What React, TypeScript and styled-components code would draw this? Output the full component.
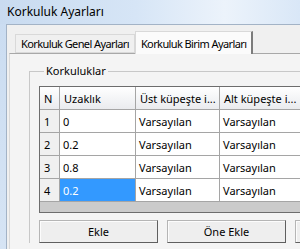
import styled, { createGlobalStyle } from 'styled-components';

const GlobalStyle = createGlobalStyle`
  html, body {
    margin: 0;
    padding: 0;
    background: #f0f0f0;
  }
  body {
    font-family: 'Noto Sans', 'DejaVu Sans', sans-serif;
    font-size: 11px;
    color: #000;
  }
`;

type Row = {
  no: number;
  distance: string;
  top: string;
  bottom: string;
};

const rows: Row[] = [
  { no: 1, distance: '0', top: 'Varsayılan', bottom: 'Varsayılan' },
  { no: 2, distance: '0.2', top: 'Varsayılan', bottom: 'Varsayılan' },
  { no: 3, distance: '0.8', top: 'Varsayılan', bottom: 'Varsayılan' },
  { no: 4, distance: '0.2', top: 'Varsayılan', bottom: 'Varsayılan' },
];

const App = () => {
  return (
    <>
      <GlobalStyle />
      <Window>
        <TitleBar>Korkuluk Ayarları</TitleBar>
        <Client>
          <TabStrip>
            <Tab>Korkuluk Genel Ayarları</Tab>
            <Tab active>Korkuluk Birim Ayarları</Tab>
          </TabStrip>
          <TabPage>
            <GroupBox>
              <Legend>Korkuluklar</Legend>
              <GridFrame>
                <Table>
                  <colgroup>
                    <col style={{ width: 20 }} />
                    <col style={{ width: 76 }} />
                    <col style={{ width: 84 }} />
                    <col style={{ width: 84 }} />
                  </colgroup>
                  <thead>
                    <tr>
                      <HeadCell>N</HeadCell>
                      <HeadCell>Uzaklık</HeadCell>
                      <HeadCell>Üst küpeşte i...</HeadCell>
                      <HeadCell>Alt küpeşte i...</HeadCell>
                    </tr>
                  </thead>
                  <tbody>
                    {rows.map((r) => (
                      <tr key={r.no}>
                        <RowHead>{r.no}</RowHead>
                        <Cell selected={r.no === 4}>{r.distance}</Cell>
                        <Cell>{r.top}</Cell>
                        <Cell>{r.bottom}</Cell>
                      </tr>
                    ))}
                  </tbody>
                </Table>
              </GridFrame>
              <ButtonRow>
                <Button>Ekle</Button>
                <Button>Öne Ekle</Button>
                {/* sağdaki buton pencerenin dışında kalıyor */}
                <Button aria-hidden />
              </ButtonRow>
            </GroupBox>
          </TabPage>
        </Client>
      </Window>
    </>
  );
};

const Window = styled.div`
  width: 300px;
  height: 249px;
  overflow: hidden;
  display: flex;
  flex-direction: column;
  background: linear-gradient(180deg, #cadcf1 0%, #d6e4f4 100%);
`;

const TitleBar = styled.div`
  height: 24px;
  flex-shrink: 0;
  padding-left: 7px;
  line-height: 24px;
  font-size: 12px;
  color: #000;
  background: linear-gradient(90deg, #c9dbf0 0%, #d6e5f6 45%, #ecf3fb 75%, #d9e7f7 100%);
`;

const Client = styled.div`
  flex: 1;
  width: 400px;
  margin-left: 6px;
  padding: 6px 0 0 2px;
  background: #f0f0f0;
  border-left: 1px solid #a3b3c6;
  border-top: 1px solid #a3b3c6;
  display: flex;
  flex-direction: column;
`;

const TabStrip = styled.div`
  display: flex;
  align-items: flex-end;
  height: 22px;
  padding-left: 6px;
  position: relative;
  z-index: 1;
`;

const Tab = styled.div<{ active?: boolean }>`
  box-sizing: border-box;
  height: ${({ active }) => (active ? '23px' : '19px')};
  margin-bottom: ${({ active }) => (active ? '-1px' : '0')};
  padding: 0 5px;
  display: flex;
  align-items: center;
  white-space: nowrap;
  letter-spacing: -0.6px;
  background: ${({ active }) => (active ? '#fbfbfb' : '#f0f0f0')};
  border: 1px solid #d9d9d9;
  border-bottom: ${({ active }) => (active ? 'none' : '1px solid #d9d9d9')};
  border-right: ${({ active }) => (active ? '2px solid #7c7c7c' : '1px solid #d9d9d9')};
`;

const TabPage = styled.div`
  flex: 1;
  background: #f4f4f4;
  border-top: 1px solid #a8a8a8;
  border-left: 1px solid #d9d9d9;
  padding: 10px 0 0 19px;
`;

const GroupBox = styled.fieldset`
  margin: 0;
  padding: 8px 0 0 9px;
  border: 1px solid #c8c8c8;
  border-right: none;
  border-bottom: none;
  min-width: 0;
`;

const Legend = styled.legend`
  margin-left: 5px;
  padding: 0 2px;
  line-height: 14px;
`;

const GridFrame = styled.div`
  width: 400px;
  height: 125px;
  overflow: hidden;
  background: #cbcbcb;
  border: 1px solid #6d6d6d;
  border-right: none;
`;

const Table = styled.table`
  border-collapse: separate;
  border-spacing: 0;
  table-layout: fixed;
  width: 264px;
`;

const HeadCell = styled.th`
  box-sizing: border-box;
  height: 23px;
  padding: 0 0 0 4px;
  text-align: left;
  font-weight: normal;
  white-space: nowrap;
  overflow: hidden;
  background: linear-gradient(180deg, #ffffff 0%, #f3f4f6 55%, #eaebee 100%);
  border-right: 1px solid #a5a5a5;
  border-bottom: 1px solid #a5a5a5;
`;

const RowHead = styled.td`
  box-sizing: border-box;
  height: 23px;
  padding: 0 0 0 4px;
  background: #f0f0f0;
  border-right: 1px solid #a5a5a5;
  border-bottom: 1px solid #a5a5a5;
`;

const Cell = styled.td<{ selected?: boolean }>`
  box-sizing: border-box;
  height: 23px;
  padding: 0 0 0 3px;
  white-space: nowrap;
  background: ${({ selected }) => (selected ? '#3399ff' : '#ffffff')};
  color: ${({ selected }) => (selected ? '#ffffff' : '#000000')};
  border-right: 1px solid #a5a5a5;
  border-bottom: 1px solid #a5a5a5;
`;

const ButtonRow = styled.div`
  display: flex;
  gap: 9px;
  margin-top: 7px;
`;

const Button = styled.button`
  box-sizing: border-box;
  width: 119px;
  height: 23px;
  flex-shrink: 0;
  font-family: inherit;
  font-size: 11px;
  color: #000;
  background: #eeeeee;
  border: 1px solid #b5b5b5;
  border-right-color: #5f5f5f;
  border-bottom-color: #5f5f5f;
  box-shadow: inset 1px 1px 0 #fcfcfc;
  border-radius: 0;
  padding: 0;
`;

export default App;
